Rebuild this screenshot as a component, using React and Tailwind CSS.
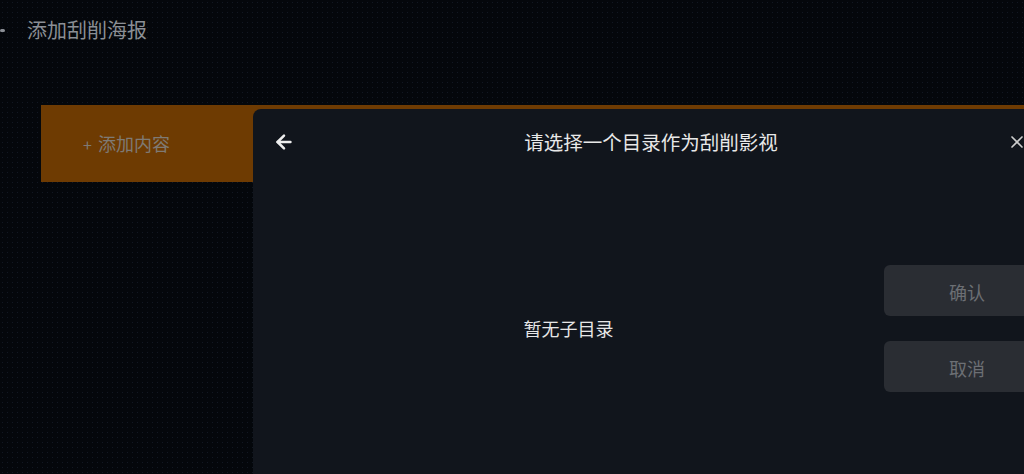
import React from 'react';
import { ArrowLeft, X } from 'lucide-react';

const font = { fontFamily: '"Noto Sans CJK SC", "Noto Sans", sans-serif' };

const App = () => {
    return (
        <div
            className="relative w-[1024px] h-[474px] overflow-hidden bg-[#04070b] bg-[radial-gradient(circle,#111722_0.6px,transparent_0.8px)] bg-[length:5px_5px]"
            style={font}
        >
            {/* Page header */}
            <div className="flex items-center h-[60px] gap-[22px]">
                <span className="w-[5px] h-[3px] bg-[#8b8f95] rounded-sm" />
                <h1 className="text-[20px] text-[#8b8f95] leading-none">添加刮削海报</h1>
            </div>

            {/* Add content bar */}
            <div className="mt-[45px] ml-[41px] h-[77px] bg-[#6e3b02] flex items-center pl-[42px] gap-[6px] text-[#7f7a74]">
                <span className="text-[16px]">+</span>
                <span className="text-[18px]">添加内容</span>
            </div>

            {/* Dialog */}
            <div className="absolute left-[253px] top-[109px] w-[800px] h-[400px] bg-[#11151c] rounded-tl-[8px] flex flex-col">
                <div className="flex items-center justify-between h-[66px] pl-[20px] pr-[26px]">
                    <ArrowLeft size={22} strokeWidth={2.75} className="text-[#eeeeee]" />
                    <h2 className="text-[19.5px] text-[#e8e8e8] leading-none">请选择一个目录作为刮削影视</h2>
                    <X size={20} strokeWidth={2} className="text-[#cccccc]" />
                </div>
                <div className="flex flex-1">
                    <div className="w-[631px] flex justify-center pt-[144px]">
                        <p className="text-[18px] text-[#e6e6e6] leading-none">暂无子目录</p>
                    </div>
                    <div className="flex flex-col gap-[25px] pt-[90px]">
                        <button className="w-[166px] h-[51px] pt-[3px] rounded-[6px] bg-[#2a2d33] text-[18px] text-[#6c6f74]">确认</button>
                        <button className="w-[166px] h-[51px] pt-[3px] rounded-[6px] bg-[#2a2d33] text-[18px] text-[#6c6f74]">取消</button>
                    </div>
                </div>
            </div>
        </div>
    );
};

export default App;
